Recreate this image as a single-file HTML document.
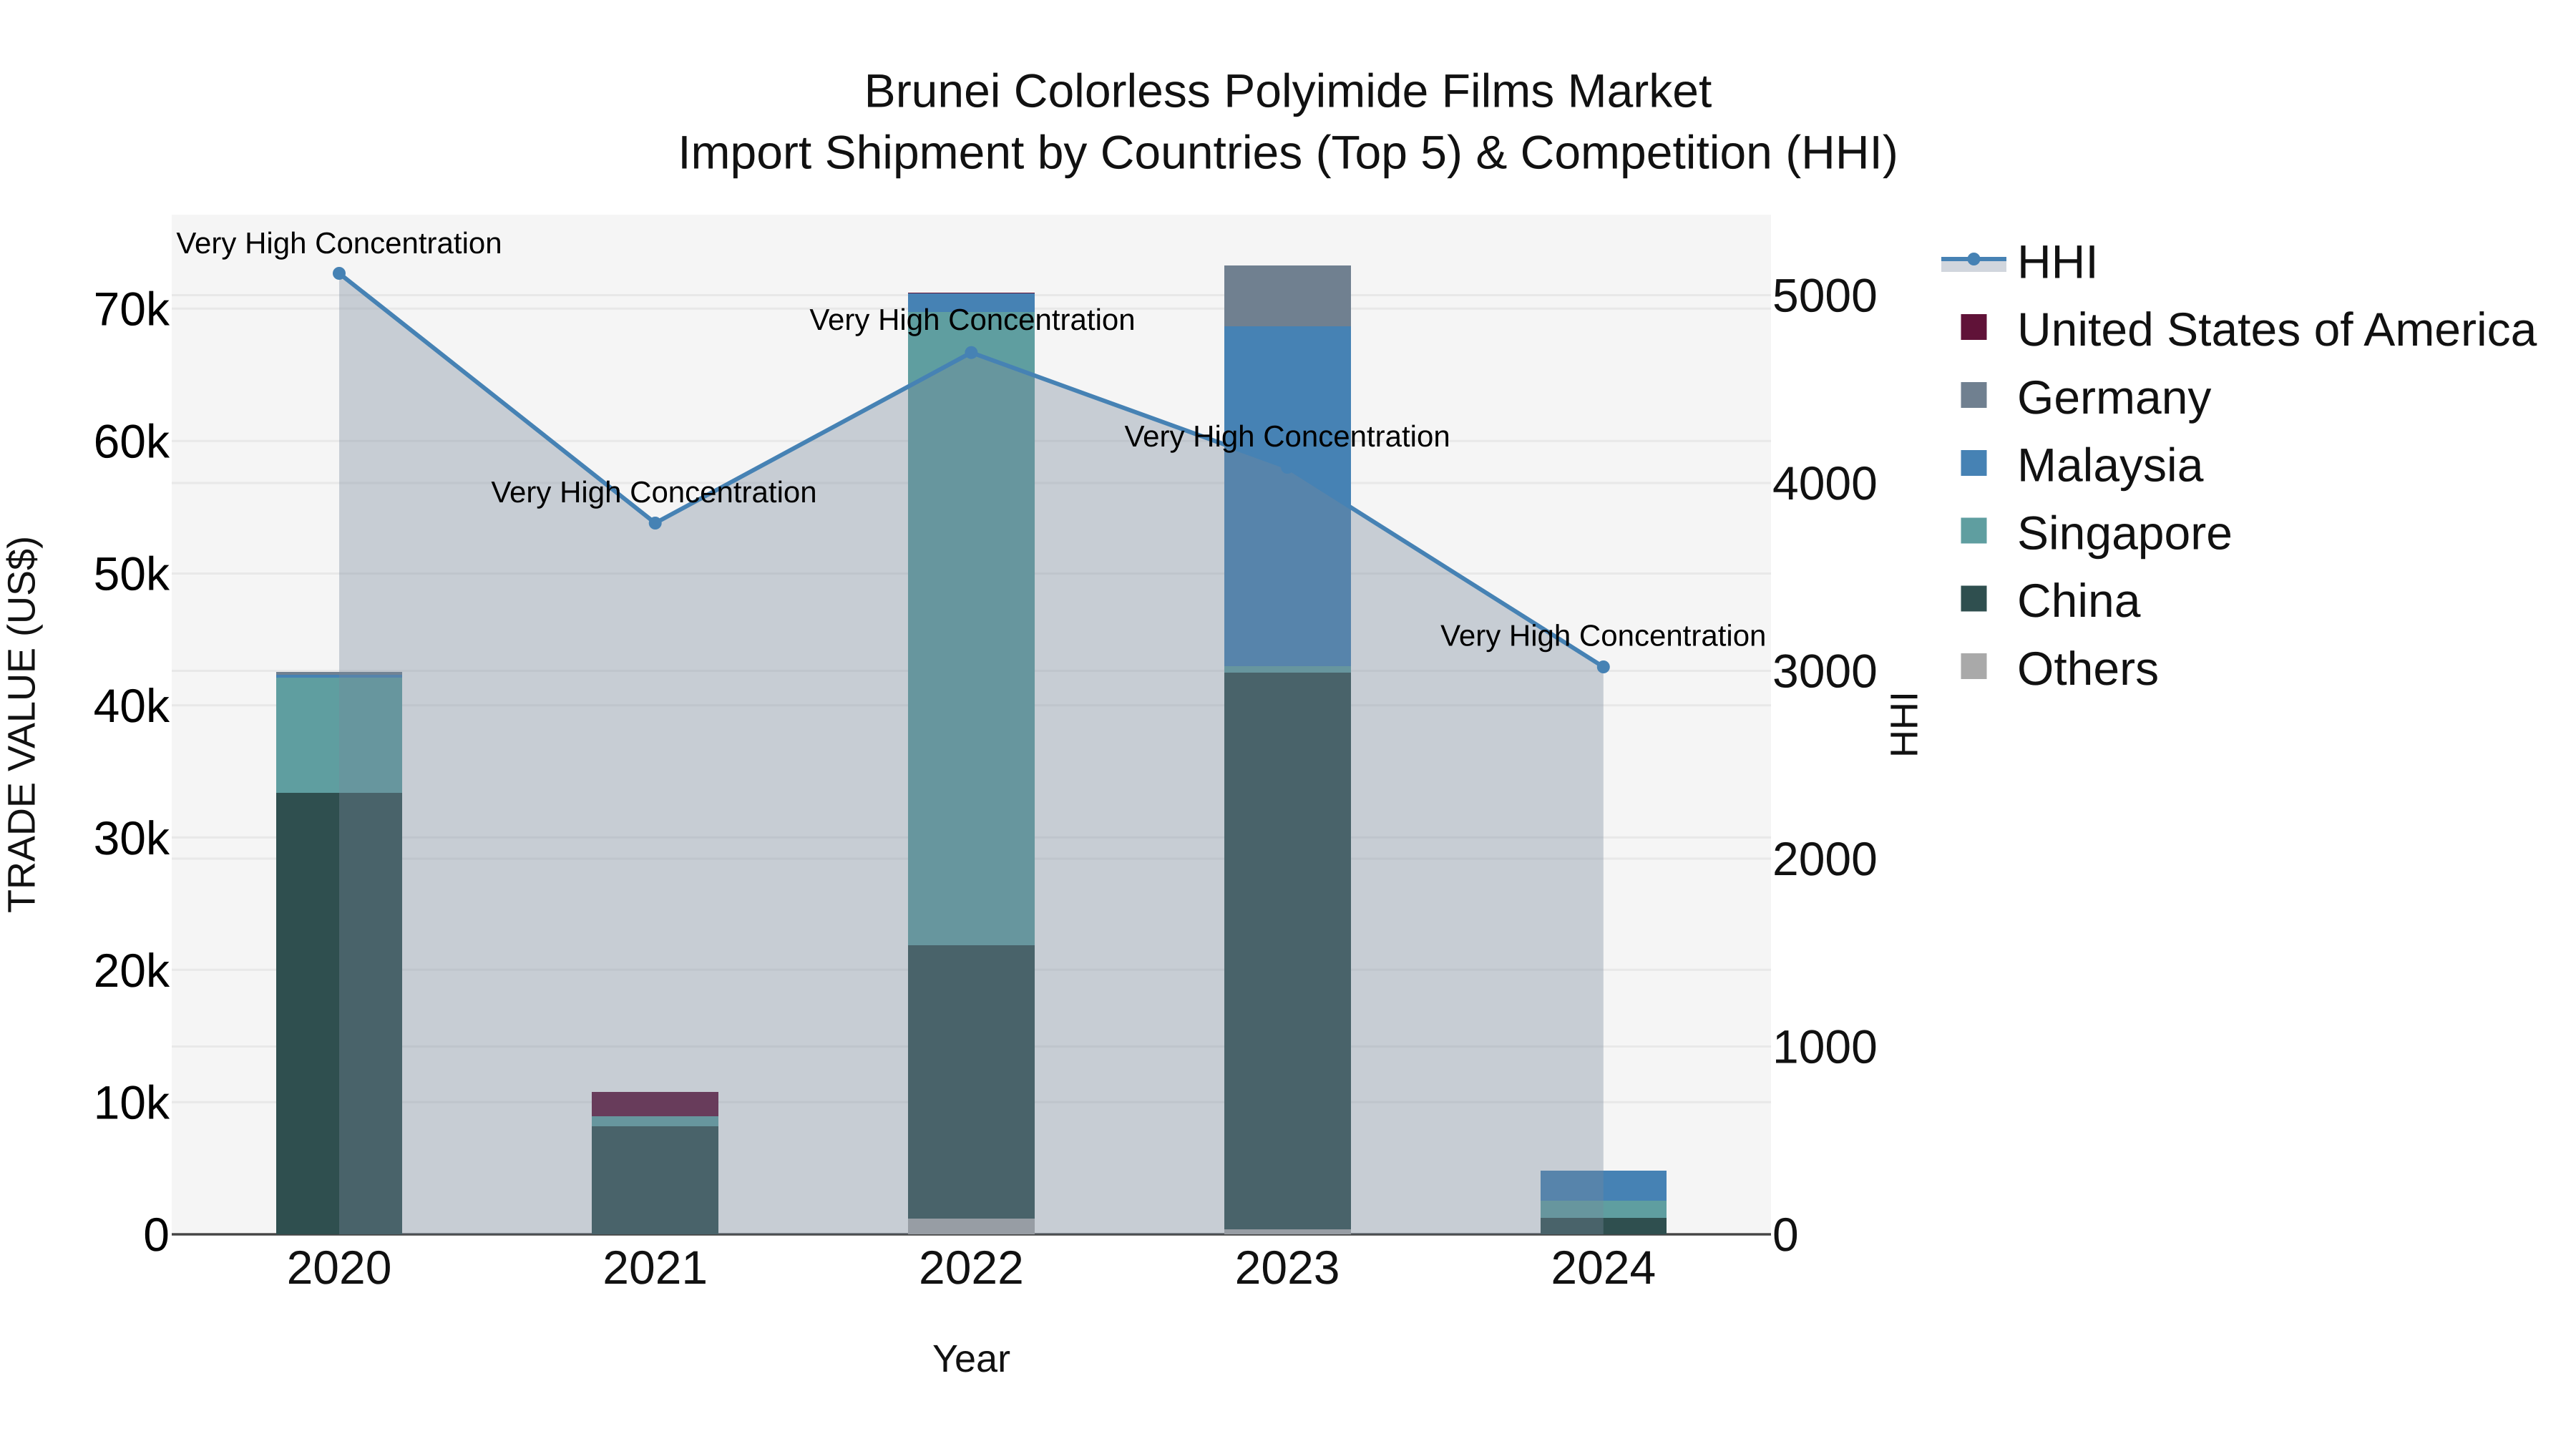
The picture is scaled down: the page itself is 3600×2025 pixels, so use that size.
<!DOCTYPE html>
<html lang="en">
<head>
<meta charset="utf-8">
<title>Brunei Colorless Polyimide Films Market</title>
<style>
html,body{margin:0;padding:0;background:#fff;width:3600px;height:2025px;overflow:hidden}
svg{display:block}
text{font-family:"Liberation Sans",Arial,sans-serif;text-rendering:geometricPrecision;fill:#111}
.t{font-size:66px}
.a{font-size:42px;fill:#000;text-anchor:middle}
.m{text-anchor:middle}
.e{text-anchor:end}
.ax{font-size:54px;text-anchor:middle}
</style>
</head>
<body>
<svg width="3600" height="2025" viewBox="0 0 3600 2025" xmlns="http://www.w3.org/2000/svg">
<rect width="3600" height="2025" fill="#fff"/>
<rect x="240" y="300" width="2235" height="1425" fill="#f5f5f5"/>

<!-- grid -->
<g stroke="#e8e8e8" stroke-width="3">
<line x1="240" x2="2475" y1="412.5" y2="412.5"/>
<line x1="240" x2="2475" y1="431.3" y2="431.3"/>
<line x1="240" x2="2475" y1="616.3" y2="616.3"/>
<line x1="240" x2="2475" y1="675" y2="675"/>
<line x1="240" x2="2475" y1="801.5" y2="801.5"/>
<line x1="240" x2="2475" y1="937.5" y2="937.5"/>
<line x1="240" x2="2475" y1="985.6" y2="985.6"/>
<line x1="240" x2="2475" y1="1170.4" y2="1170.4"/>
<line x1="240" x2="2475" y1="1200" y2="1200"/>
<line x1="240" x2="2475" y1="1355.3" y2="1355.3"/>
<line x1="240" x2="2475" y1="1462.5" y2="1462.5"/>
<line x1="240" x2="2475" y1="1540.3" y2="1540.3"/>
</g>
<rect x="240" y="1723.3" width="2235" height="3.4" fill="#444"/>

<!-- bars -->
<g shape-rendering="crispEdges">
<rect x="386" y="1108" width="176" height="617" fill="#2F4F4F"/>
<rect x="386" y="947" width="176" height="161" fill="#5F9EA0"/>
<rect x="386" y="943" width="176" height="4" fill="#4682B4"/>
<rect x="386" y="939" width="176" height="4" fill="#708090"/>

<rect x="827" y="1574" width="177" height="151" fill="#2F4F4F"/>
<rect x="827" y="1560" width="177" height="14" fill="#5F9EA0"/>
<rect x="827" y="1526" width="177" height="34" fill="#601238"/>

<rect x="1269" y="1703" width="177" height="22" fill="#A9A9A9"/>
<rect x="1269" y="1321" width="177" height="382" fill="#2F4F4F"/>
<rect x="1269" y="436" width="177" height="885" fill="#5F9EA0"/>
<rect x="1269" y="410" width="177" height="26" fill="#4682B4"/>
<rect x="1269" y="409" width="177" height="1" fill="#601238"/>

<rect x="1711" y="1718" width="177" height="7" fill="#A9A9A9"/>
<rect x="1711" y="940" width="177" height="778" fill="#2F4F4F"/>
<rect x="1711" y="931" width="177" height="9" fill="#5F9EA0"/>
<rect x="1711" y="456" width="177" height="475" fill="#4682B4"/>
<rect x="1711" y="371" width="177" height="85" fill="#708090"/>

<rect x="2153" y="1702" width="176" height="23" fill="#2F4F4F"/>
<rect x="2153" y="1678" width="176" height="24" fill="#5F9EA0"/>
<rect x="2153" y="1636" width="176" height="42" fill="#4682B4"/>
</g>

<!-- HHI area, line, markers -->
<polygon points="474,382 915.7,731 1357.4,492.7 1799.1,653 2240.8,932 2240.8,1725 474,1725" fill="#77879A" fill-opacity="0.36"/>
<polyline points="474,382 915.7,731 1357.4,492.7 1799.1,653 2240.8,932" fill="none" stroke="#4682B4" stroke-width="6" stroke-linejoin="round"/>
<g fill="#4682B4">
<circle cx="474" cy="382" r="9"/>
<circle cx="915.7" cy="731" r="9"/>
<circle cx="1357.4" cy="492.7" r="9"/>
<circle cx="1799.1" cy="653" r="9"/>
<circle cx="2240.8" cy="932" r="9"/>
</g>

<!-- annotations -->
<text class="a" x="474" y="354">Very High Concentration</text>
<text class="a" x="914" y="702">Very High Concentration</text>
<text class="a" x="1359" y="461">Very High Concentration</text>
<text class="a" x="1799.1" y="624">Very High Concentration</text>
<text class="a" x="2240.8" y="902.5">Very High Concentration</text>

<!-- title -->
<text class="t m" x="1800" y="149.5">Brunei Colorless Polyimide Films Market</text>
<text class="t m" x="1800" y="235.5">Import Shipment by Countries (Top 5) &amp; Competition (HHI)</text>

<!-- left ticks -->
<g class="t e">
<text class="t e" x="237" y="454.5" style="fill:#000">70k</text>
<text class="t e" x="237" y="639.5" style="fill:#000">60k</text>
<text class="t e" x="237" y="824.5" style="fill:#000">50k</text>
<text class="t e" x="237" y="1009" style="fill:#000">40k</text>
<text class="t e" x="237" y="1194" style="fill:#000">30k</text>
<text class="t e" x="237" y="1379" style="fill:#000">20k</text>
<text class="t e" x="237" y="1563.5" style="fill:#000">10k</text>
<text class="t e" x="237" y="1748" style="fill:#000">0</text>
</g>

<!-- right ticks -->
<text class="t" x="2477" y="435.5">5000</text>
<text class="t" x="2477" y="698">4000</text>
<text class="t" x="2477" y="960.5">3000</text>
<text class="t" x="2477" y="1223">2000</text>
<text class="t" x="2477" y="1485.5">1000</text>
<text class="t" x="2477" y="1748">0</text>

<!-- x ticks -->
<text class="t m" x="474" y="1794">2020</text>
<text class="t m" x="915.7" y="1794">2021</text>
<text class="t m" x="1357.4" y="1794">2022</text>
<text class="t m" x="1799.1" y="1794">2023</text>
<text class="t m" x="2240.8" y="1794">2024</text>

<!-- axis titles -->
<text class="ax" x="1357.5" y="1917">Year</text>
<text class="ax" transform="translate(48.6 1012.5) rotate(-90)" x="0" y="0">TRADE VALUE (US$)</text>
<text class="ax" transform="translate(2679.5 1012.5) rotate(-90)" x="0" y="0">HHI</text>

<!-- legend -->
<rect x="2713" y="362" width="91" height="18" fill="#77879A" fill-opacity="0.34"/>
<line x1="2713" x2="2804" y1="362" y2="362" stroke="#4682B4" stroke-width="6"/>
<circle cx="2758.5" cy="362" r="9" fill="#4682B4"/>
<g shape-rendering="crispEdges">
<rect x="2740.5" y="439" width="36" height="36" fill="#601238"/>
<rect x="2740.5" y="534" width="36" height="36" fill="#708090"/>
<rect x="2740.5" y="629" width="36" height="36" fill="#4682B4"/>
<rect x="2740.5" y="723.5" width="36" height="36" fill="#5F9EA0"/>
<rect x="2740.5" y="818.5" width="36" height="36" fill="#2F4F4F"/>
<rect x="2740.5" y="913" width="36" height="36" fill="#A9A9A9"/>
</g>
<text class="t" x="2819" y="388.5">HHI</text>
<text class="t" x="2819" y="483">United States of America</text>
<text class="t" x="2819" y="578">Germany</text>
<text class="t" x="2819" y="672.5">Malaysia</text>
<text class="t" x="2819" y="767.5">Singapore</text>
<text class="t" x="2819" y="862">China</text>
<text class="t" x="2819" y="957">Others</text>
</svg>
</body>
</html>
